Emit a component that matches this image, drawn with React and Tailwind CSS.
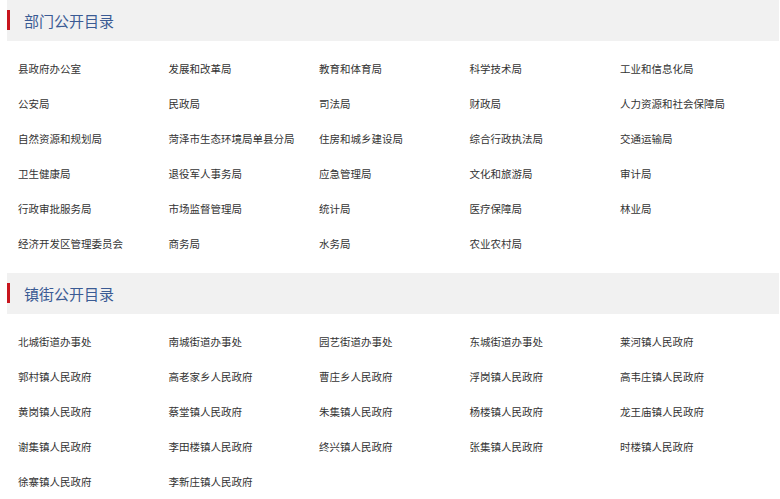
const DEPTS = [
  '县政府办公室', '发展和改革局', '教育和体育局', '科学技术局', '工业和信息化局',
  '公安局', '民政局', '司法局', '财政局', '人力资源和社会保障局',
  '自然资源和规划局', '菏泽市生态环境局单县分局', '住房和城乡建设局', '综合行政执法局', '交通运输局',
  '卫生健康局', '退役军人事务局', '应急管理局', '文化和旅游局', '审计局',
  '行政审批服务局', '市场监督管理局', '统计局', '医疗保障局', '林业局',
  '经济开发区管理委员会', '商务局', '水务局', '农业农村局',
]

const TOWNS = [
  '北城街道办事处', '南城街道办事处', '园艺街道办事处', '东城街道办事处', '莱河镇人民政府',
  '郭村镇人民政府', '高老家乡人民政府', '曹庄乡人民政府', '浮岗镇人民政府', '高韦庄镇人民政府',
  '黄岗镇人民政府', '蔡堂镇人民政府', '朱集镇人民政府', '杨楼镇人民政府', '龙王庙镇人民政府',
  '谢集镇人民政府', '李田楼镇人民政府', '终兴镇人民政府', '张集镇人民政府', '时楼镇人民政府',
  '徐寨镇人民政府', '李新庄镇人民政府',
]

export default function App() {
  return (
    <div
      className="w-[780px] h-[499px] overflow-hidden bg-white pl-[7px] pr-[1px]"
      style={{ fontFamily: '"Microsoft YaHei", "Noto Sans CJK SC", sans-serif' }}
    >
      <Section title="部门公开目录" items={DEPTS} />
      <Section title="镇街公开目录" items={TOWNS} />
    </div>
  )
}

function Section({ title, items }) {
  return (
    <div className="mb-[12px]">
      <div className="h-[41px] bg-[#f1f1f1] flex items-center">
        <span className="w-[3px] h-[20px] bg-[#c8161e] -mt-[2px]" />
        <h2 className="ml-[14px] text-[15px] text-[#3b5b94] leading-none">{title}</h2>
      </div>
      <ul className="pt-[10px] pl-[11px] grid grid-cols-[repeat(5,150.5px)]">
        {items.map(name => (
          <li key={name} className="h-[35px] flex items-center text-[10.5px] text-[#333]">
            {name}
          </li>
        ))}
      </ul>
    </div>
  )
}
